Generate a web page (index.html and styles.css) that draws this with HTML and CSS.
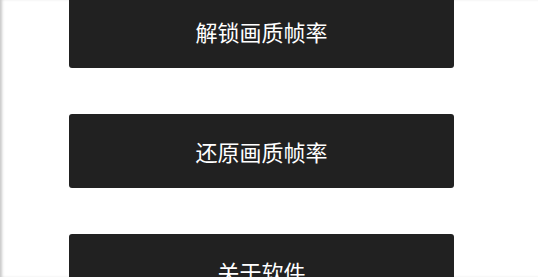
FILE: index.html
```html
<!DOCTYPE html>
<html lang="zh-CN">
<head>
<meta charset="utf-8">
<title>设置</title>
<link rel="stylesheet" href="styles.css">
</head>
<body>
<div class="page">
  <div class="menu">
    <button class="btn">解锁画质帧率</button>
    <button class="btn">还原画质帧率</button>
    <button class="btn">关于软件</button>
  </div>
</div>
</body>
</html>
```
FILE: styles.css
```css
html, body {
  margin: 0;
  padding: 0;
  background: #ffffff;
  overflow: hidden;
}
.page {
  width: 538px;
  height: 277px;
  box-shadow: inset 3px 0 3px -1px #c8c8c8;
  overflow: hidden;
}
.menu {
  display: flex;
  flex-direction: column;
  gap: 46px;
  margin-top: -6px;
  padding-left: 69px;
}
.btn {
  width: 385px;
  height: 74px;
  border: none;
  border-radius: 3px;
  background: #212121;
  color: #ffffff;
  font-family: "Noto Sans CJK SC", "Noto Sans", sans-serif;
  font-size: 22px;
  padding: 0;
  display: flex;
  align-items: center;
  justify-content: center;
}
```
